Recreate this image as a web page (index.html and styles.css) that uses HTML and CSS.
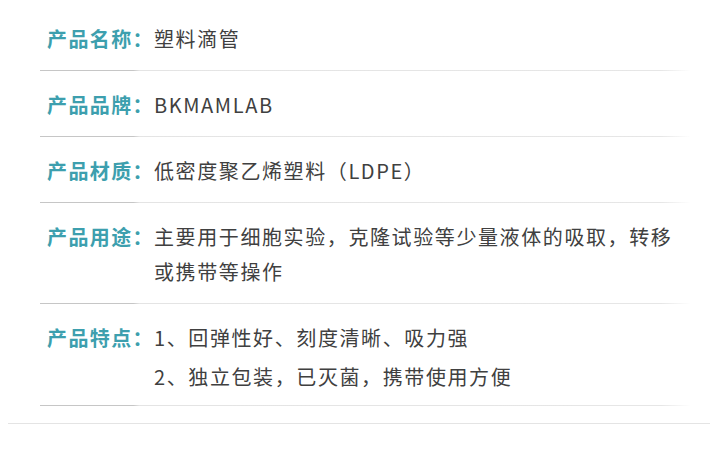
FILE: index.html
```html
<!DOCTYPE html>
<html lang="zh-CN">
<head>
<meta charset="utf-8">
<title>产品参数</title>
<link rel="stylesheet" href="styles.css">
</head>
<body>
<div class="page">
  <div class="spec">
    <div class="row">
      <div class="label">产品名称：</div>
      <div class="value">塑料滴管</div>
    </div>
    <div class="row">
      <div class="label">产品品牌：</div>
      <div class="value">BKMAMLAB</div>
    </div>
    <div class="row">
      <div class="label">产品材质：</div>
      <div class="value">低密度聚乙烯塑料（LDPE）</div>
    </div>
    <div class="row">
      <div class="label">产品用途：</div>
      <div class="value">主要用于细胞实验，克隆试验等少量液体的吸取，转移或携带等操作</div>
    </div>
    <div class="row row-last">
      <div class="label">产品特点：</div>
      <div class="value features">
        <p>1、回弹性好、刻度清晰、吸力强</p>
        <p>2、独立包装，已灭菌，携带使用方便</p>
      </div>
    </div>
  </div>
  <div class="rule"></div>
</div>
</body>
</html>
```

FILE: styles.css
```css
html, body {
  margin: 0;
  padding: 0;
  background: #ffffff;
}

body {
  font-family: "Noto Sans CJK SC", "Noto Sans", sans-serif;
  font-size: 20px;
  color: #444444;
}

.page {
  width: 710px;
  padding-top: 5px;
}

.spec {
  margin: 0 20px 0 40px;
}

.row {
  display: flex;
  padding: 16px 15px 14px 7px;
  line-height: 35px;
  letter-spacing: 1.4px;
  border-bottom: 1px solid #e6e6e6;
  border-image: linear-gradient(to right, #c6c6c6 0, #c6c6c6 94px, #e4e4e4 100px, #e6e6e6 620px, #ffffff 650px) 1;
}

.row-last {
  padding-bottom: 11px;
}

.label {
  flex-shrink: 0;
  color: #3d9fae;
  font-weight: 700;
}

.value {
  flex: 1;
  min-width: 0;
  color: #404040;
  letter-spacing: 1.6px;
}

.features p {
  margin: 0;
}

.features p + p {
  margin-top: 4px;
}

.rule {
  margin: 17px 0 0 8px;
  height: 1px;
  background: #e4e4e4;
}
```
